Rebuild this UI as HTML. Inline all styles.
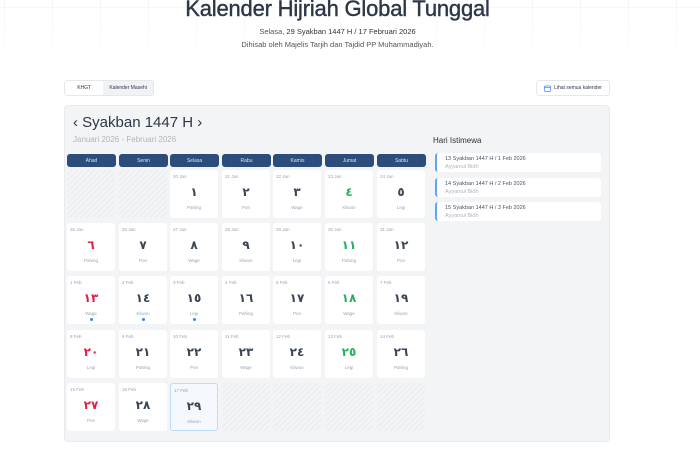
<!DOCTYPE html>
<html><head><meta charset="utf-8"><style>
*{box-sizing:border-box;margin:0;padding:0}
body{width:700px;height:450px;overflow:hidden;background:#fff;font-family:"Liberation Sans","DejaVu Sans",sans-serif;color:#2d3748;position:relative}
.hdr{position:absolute;left:0;top:0;width:700px;height:50px;background-image:linear-gradient(to right,#eef0f3 1px,transparent 1px),linear-gradient(to bottom,#eef0f3 1px,transparent 1px);background-size:48px 48px;background-position:4px 7px}
.hdr .fade{position:absolute;inset:0;background:linear-gradient(to bottom,rgba(255,255,255,.4),rgba(255,255,255,.7))}
h1{position:absolute;left:0;width:675px;text-align:center;top:-4px;font-size:22px;font-weight:normal;color:#2d3748;letter-spacing:-.2px;-webkit-text-stroke:.4px #2d3748}
.s1,.s2{position:absolute;left:0;width:675px;text-align:center;font-size:7.5px;color:#555}
.s1{top:27px}.s2{top:40px}
.tabs{position:absolute;left:64px;top:80px;width:90px;height:16px;border:1px solid #e5e7eb;border-radius:3px;display:flex;font-size:5px;overflow:hidden}
.tabs div{flex:1;display:flex;align-items:center;justify-content:center}
.tabs div+div{background:#f1f2f4;flex:1.3}
.btn{position:absolute;left:536px;top:80px;width:74px;height:16px;border:1px solid #e5e7eb;border-radius:3px;font-size:5px;display:flex;align-items:center;justify-content:center;gap:3px}
.box{position:absolute;left:64px;top:105px;width:546px;height:337px;background:#f3f4f6;border-radius:4px;border:1px solid #e8eaed}
.mh{position:absolute;left:73px;top:114px;font-size:15px;color:#2d3748}
.ms{position:absolute;left:73px;top:135px;font-size:8px;color:#b0b5bd}
.dh{position:absolute;top:154px;height:13px;width:49px;background:#2c4c7c;border-radius:3px;color:#dbe3ee;font-size:5px;display:flex;align-items:center;justify-content:center}
.c{position:absolute;width:48px;height:48px;background:#fff;border-radius:3px}
.c .d{position:absolute;left:3px;top:4px;font-size:4.5px;color:#9ca3af}
.c .n{position:absolute;left:0;right:0;top:15px;text-align:center;font-family:"DejaVu Sans",sans-serif;font-size:12px;font-weight:bold;color:#3a4556}
.c .p{position:absolute;left:0;right:0;top:35px;text-align:center;font-size:4.5px;color:#9ca3af}
.c.e{background:repeating-linear-gradient(135deg,#f3f4f6 0 3px,#e9ebee 3px 4px)}
.c.t{background:#f5f8fc;border:1px solid #bfdbf5}
.dot{position:absolute;left:23px;top:42px;width:3px;height:3px;border-radius:50%;background:#3b82f6}
.r{color:#e11d48!important}.g{color:#22b35e!important}
.hi{position:absolute;left:433px;top:136px;font-size:8px;color:#333}
.it{position:absolute;left:435px;width:166px;height:19px;background:#fff;border-radius:3px;border-left:2px solid #60a5fa}
.it b{position:absolute;left:8px;top:3px;font-weight:normal;font-size:5.5px;color:#4b5563}
.it i{position:absolute;left:8px;top:11px;font-style:normal;font-size:5.5px;color:#b0b5bd}
</style></head><body>
<div class="hdr"><div class="fade"></div></div>
<h1>Kalender Hijriah Global Tunggal</h1>
<div class="s1">Selasa, <span style="color:#333">29 Syakban 1447 H / 17 Februari 2026</span></div>
<div class="s2">Dihisab oleh Majelis Tarjih dan Tajdid PP Muhammadiyah.</div>
<div class="tabs"><div>KHGT</div><div>Kalender Masehi</div></div>
<div class="btn"><svg width="7" height="7" viewBox="0 0 7 7"><rect x=".5" y="1" width="6" height="5.5" rx="1" fill="none" stroke="#3b82f6" stroke-width=".7"/><line x1=".5" y1="2.6" x2="6.5" y2="2.6" stroke="#3b82f6" stroke-width=".7"/></svg>Lihat semua kalender</div>
<div class="box"></div>
<div class="mh">‹ Syakban 1447 H ›</div>
<div class="ms">Januari 2026 - Februari 2026</div>
<div class="hi">Hari Istimewa</div>
<div class="it" style="top:153px"><b>13 Syakban 1447 H / 1 Feb 2026</b><i>Ayyamul Bidh</i></div>
<div class="it" style="top:178px"><b>14 Syakban 1447 H / 2 Feb 2026</b><i>Ayyamul Bidh</i></div>
<div class="it" style="top:202px"><b>15 Syakban 1447 H / 3 Feb 2026</b><i>Ayyamul Bidh</i></div>
<div id="g"></div>
<script>
var xs=[67,119,170,222,273,325,377],ys=[170,223,276,330,383];
var names=["Ahad","Senin","Selasa","Rabu","Kamis","Jumat","Sabtu"];
var h="";names.forEach(function(n,i){h+='<div class="dh" style="left:'+xs[i]+'px">'+n+'</div>'});
var ar="٠١٢٣٤٥٦٧٨٩";function A(n){return String(n).split('').map(function(c){return ar[+c]}).join('')}
var pas=["Pahing","Pon","Wage","Kliwon","Legi"];
for(var k=0;k<35;k++){var r=Math.floor(k/7),c=k%7,x=xs[c],y=ys[r];var day=k-1;
if(day<1||day>29){h+='<div class="c e" style="left:'+x+'px;top:'+y+'px"></div>';continue}
var dt=day<=12?(19+day)+' Jan':(day-12)+' Feb';
var cl=c==0?'r':(c==5?'g':'');
h+='<div class="c'+(day==29?' t':'')+'" style="left:'+x+'px;top:'+y+'px"><div class="d">'+dt+'</div><div class="n '+cl+'">'+A(day)+'</div><div class="p">'+pas[(day-1)%5]+'</div>'+(day>=13&&day<=15?'<div class="dot"></div>':'')+'</div>'}
document.getElementById('g').innerHTML=h;
</script>
</body></html>
